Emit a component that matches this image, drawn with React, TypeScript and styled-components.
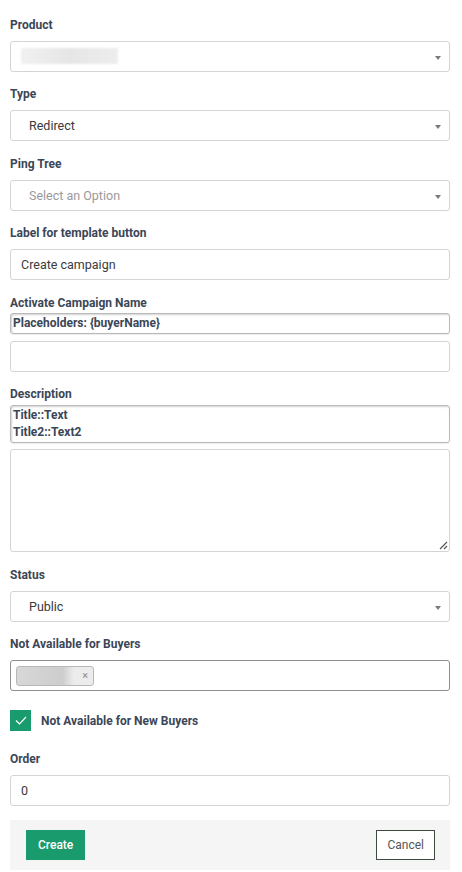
import React from "react";
import styled, { createGlobalStyle } from "styled-components";

const GlobalStyle = createGlobalStyle`
  body {
    margin: 0;
    background: #ffffff;
    font-family: Roboto, "Liberation Sans", Arial, sans-serif;
  }
`;

const Form = styled.form`
  display: flex;
  flex-direction: column;
  width: 440px;
  padding: 16.5px 0 0 10px;
`;

const Field = styled.div<{ $last?: boolean }>`
  display: flex;
  flex-direction: column;
  margin-bottom: ${(p) => (p.$last ? "14px" : "14.5px")};
`;

const Label = styled.label<{ $tight?: boolean }>`
  font-size: 12px;
  font-weight: 700;
  line-height: 17px;
  color: #3b4656;
  margin-bottom: ${(p) => (p.$tight ? "1.5px" : "7px")};
`;

const Box = styled.div<{ $indent?: boolean; $muted?: boolean; $dark?: boolean }>`
  position: relative;
  box-sizing: border-box;
  height: 31px;
  display: flex;
  align-items: center;
  padding: 0 ${(p) => (p.$indent ? "18px" : "10px")};
  border: 1px solid ${(p) => (p.$dark ? "#8e8e8e" : "#d4d4d4")};
  border-radius: 3px;
  background: #fff;
  font-size: 12.5px;
  color: ${(p) => (p.$muted ? "#9a9a9a" : "#3a3a3a")};
`;

const Arrow = styled.span`
  position: absolute;
  right: 8px;
  top: 14px;
  width: 0;
  height: 0;
  border-left: 3.5px solid transparent;
  border-right: 3.5px solid transparent;
  border-top: 4px solid #7a7a7a;
`;

const Blur = styled.span<{ $w: number }>`
  display: block;
  height: 16px;
  width: ${(p) => p.$w}px;
  background: linear-gradient(90deg, #f1f1f1, #e6e6e6 50%, #ededed);
  filter: blur(1px);
`;

const Hint = styled.div<{ $lines?: number }>`
  box-sizing: border-box;
  padding: 1px 2px;
  border: 1px solid #b9b9b9;
  border-radius: 3px;
  box-shadow: inset 1px 1px 2px rgba(0, 0, 0, 0.18), 0 1px 1px rgba(0, 0, 0, 0.08);
  font-size: 12px;
  font-weight: 700;
  line-height: 17px;
  color: #3b4656;
  margin-bottom: 6.5px;
  min-height: ${(p) => (p.$lines || 1) * 17 + 3}px;
`;

const TextArea = styled.div`
  position: relative;
  box-sizing: border-box;
  height: 103px;
  border: 1px solid #d4d4d4;
  border-radius: 3px;
`;

const Grip = styled.svg`
  position: absolute;
  right: 1px;
  bottom: 1px;
`;

const Tag = styled.span`
  display: flex;
  align-items: center;
  justify-content: flex-end;
  box-sizing: border-box;
  width: 78px;
  height: 20px;
  margin-left: -5px;
  padding-right: 5px;
  background: linear-gradient(90deg, #d8d8d8, #cdcdcd 60%, #ececec 75%, #ececec);
  border: 1px solid #b8b8b8;
  border-radius: 3px;
  font-size: 11px;
  color: #8a8a8a;
`;

const CheckRow = styled.div`
  display: flex;
  align-items: center;
  gap: 10px;
  margin: 4.5px 0 20px;
`;

const Check = styled.span`
  display: flex;
  align-items: center;
  justify-content: center;
  width: 21px;
  height: 21px;
  background: #1a9b6d;
`;

const CheckLabel = styled.span`
  font-size: 12px;
  font-weight: 700;
  color: #3b4656;
`;

const Footer = styled.div`
  display: flex;
  justify-content: space-between;
  align-items: center;
  height: 50px;
  padding: 0 15px 0 16px;
  background: #f5f5f5;
`;

const Button = styled.button<{ $primary?: boolean }>`
  height: 30px;
  padding: 0 ${(p) => (p.$primary ? "11px" : "10px")};
  border: 1px solid ${(p) => (p.$primary ? "#1a9b6d" : "#3e4a3e")};
  background: ${(p) => (p.$primary ? "#1a9b6d" : "#fff")};
  color: ${(p) => (p.$primary ? "#fff" : "#555")};
  font-family: Roboto, "Liberation Sans", Arial, sans-serif;
  font-size: 12px;
  font-weight: ${(p) => (p.$primary ? 500 : 400)};
  border-radius: 0;
`;

function Select({ value, muted }: { value?: string; muted?: boolean }) {
  return (
    <Box $indent $muted={muted}>
      {value}
      <Arrow />
    </Box>
  );
}

export default function App() {
  return (
    <>
      <GlobalStyle />
      <Form>
        <Field>
          <Label>Product</Label>
          <Box>
            <Blur $w={97} />
            <Arrow />
          </Box>
        </Field>
        <Field>
          <Label>Type</Label>
          <Select value="Redirect" />
        </Field>
        <Field>
          <Label>Ping Tree</Label>
          <Select value="Select an Option" muted />
        </Field>
        <Field>
          <Label>Label for template button</Label>
          <Box>Create campaign</Box>
        </Field>
        <Field>
          <Label $tight>Activate Campaign Name</Label>
          <Hint>Placeholders: {"{buyerName}"}</Hint>
          <Box />
        </Field>
        <Field>
          <Label $tight>Description</Label>
          <Hint $lines={2}>
            Title::Text
            <br />
            Title2::Text2
          </Hint>
          <TextArea>
            <Grip width="9" height="9" viewBox="0 0 9 9">
              <path d="M8 1 L1 8 M8 5 L5 8" stroke="#555" strokeWidth="1.2" />
            </Grip>
          </TextArea>
        </Field>
        <Field>
          <Label>Status</Label>
          <Select value="Public" />
        </Field>
        <Field>
          <Label>Not Available for Buyers</Label>
          <Box $dark>
            <Tag>×</Tag>
          </Box>
        </Field>
        <CheckRow>
          <Check>
            <svg width="12" height="9" viewBox="0 0 12 9">
              <path d="M1 4.5 L4.5 8 L11 1" stroke="#fff" strokeWidth="1.2" fill="none" />
            </svg>
          </Check>
          <CheckLabel>Not Available for New Buyers</CheckLabel>
        </CheckRow>
        <Field $last>
          <Label>Order</Label>
          <Box>0</Box>
        </Field>
        <Footer>
          <Button $primary type="button">Create</Button>
          <Button type="button">Cancel</Button>
        </Footer>
      </Form>
    </>
  );
}
